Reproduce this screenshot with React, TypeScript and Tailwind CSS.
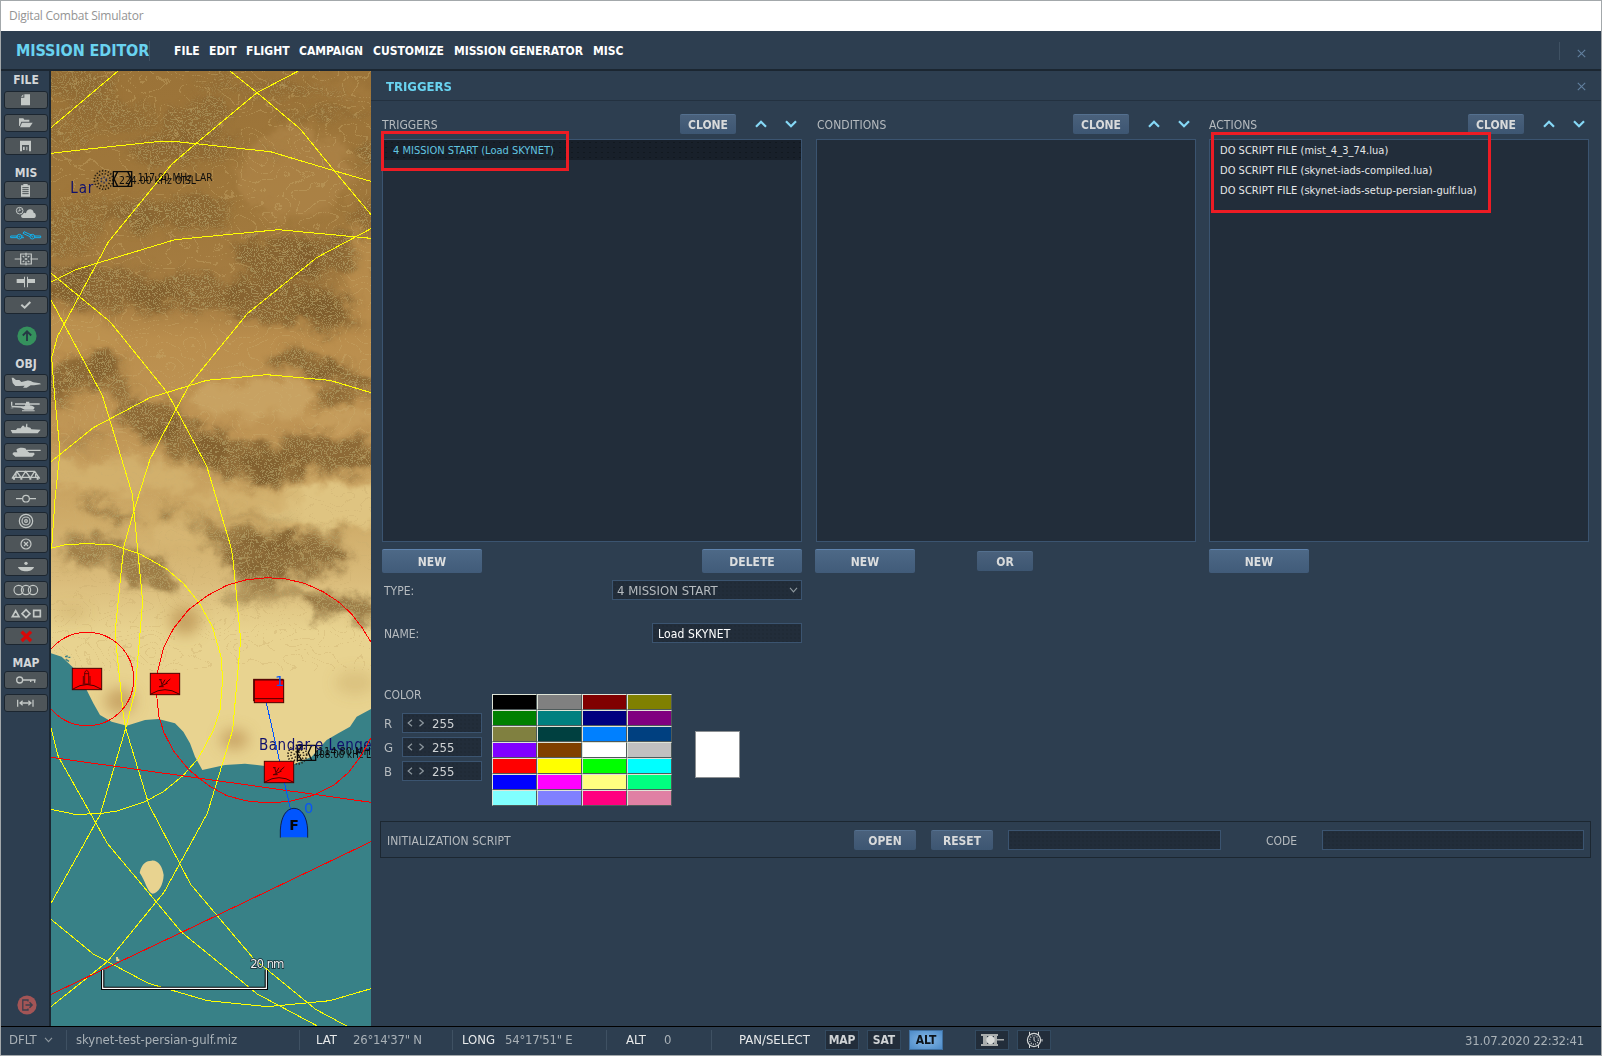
import React from "react";

const OFF = "#c3c8c6";

/* ---------- sidebar icons, drawn on a 132 x 54 grid ---------- */
const icons: Record<string, React.ReactNode> = {
  newFile: <path d="M61 10H78V43H51V20H61Z M51 17L58 10V17Z" fill={OFF} />,
  open: (
    <g fill={OFF}>
      <path d="M45 13H58L61 17H76V23H52L47 36H45Z" />
      <path d="M54 26H86L77 40H48Z" />
    </g>
  ),
  save: <path fillRule="evenodd" d="M48 11H81V43H48Z M54 24V43H75V24Z M57 29H62V39H57Z M67 29H70V40H67Z" fill={OFF} />,
  brief: (
    <g>
      <path d="M51 13H58V9H71V13H78V47H51Z" fill={OFF} />
      <path d="M55 20H74M55 26H74M55 32H74M55 38H74" stroke="#4d5357" strokeWidth="3" />
    </g>
  ),
  weather: (
    <g fill={OFF}>
      <circle cx="47" cy="20" r="10" fill="none" stroke={OFF} strokeWidth="3" />
      <path d="M47 13V21H41M47 21L52 16" stroke={OFF} strokeWidth="2.5" fill="none" />
      <path d="M57 42C49 42 50 31 57 31C57 25 64 25 66 28C68 13 87 12 89 26C97 26 98 42 90 42Z" />
    </g>
  ),
  trigger: (
    <g fill="none" stroke="#12b2ee" strokeWidth="3">
      <path d="M20 27H39V32H20ZM92 27H110V32H92ZM52 27H58M52 32H60M60 14L84 25M57 19L78 29M60 14L57 19" />
      <circle cx="46" cy="29" r="7" />
      <circle cx="85" cy="29" r="7" />
      <circle cx="46" cy="29" r="1.5" />
      <circle cx="85" cy="29" r="1.5" />
    </g>
  ),
  goal: (
    <g fill="none" stroke={OFF} strokeWidth="3.6">
      <path d="M32 27H53M79 27H102M66 8V20M66 34V46M50 12H82V42H50ZM56 18L61 22M76 18L71 22M56 36L61 32M76 36L71 32M62 27H70M66 24V30" />
    </g>
  ),
  split: <path d="M38 18H60V30H38ZM72 18H93V30H72ZM60 11H63V43H60ZM69 11H72V43H69Z" fill={OFF} />,
  check: <path d="M52 26L62 35L79 18" fill="none" stroke={OFF} strokeWidth="6" />,
  plane: <path d="M23 11H28L36 18H46L52 24L68 20C75 18 82 21 88 25L108 28L111 31L90 34H80L68 41H57L62 35L46 36H34L26 27Z" fill={OFF} />,
  heli: (
    <g fill={OFF}>
      <path d="M33 19H107V23H33ZM66 14H76V19H66ZM63 20H78V26H63ZM21 14H25V26H21Z" />
      <path d="M21 26L59 28C68 23 85 23 92 32L88 38H62L50 32L24 31ZM54 40H92V43H54ZM20 34H28V32H20Z" />
    </g>
  ),
  ship: <path d="M20 30H36L40 25H50L55 17H60L62 22H65L67 11H70V21L79 23L82 28L110 29L101 40H25Z" fill={OFF} />,
  tank: <path d="M37 20C42 14 58 13 66 17V20H110V24H70L76 29H90L92 34L85 41H34L25 33L29 28H40Z" fill={OFF} />,
  bridge: (
    <g fill="none" stroke={OFF} strokeWidth="4">
      <path d="M24 38L38 16H92L107 38M24 34H107M38 16L52 36L65 16L79 36L92 16M36 18V36M95 18V36" />
      <path d="M30 36V41M52 36V41M79 36V41M101 36V41" strokeWidth="6" />
    </g>
  ),
  waypoint: (
    <g fill="none" stroke={OFF} strokeWidth="3.6">
      <circle cx="66" cy="29" r="10" />
      <path d="M36 29H56M76 29H96" />
    </g>
  ),
  target: (
    <g fill="none" stroke={OFF} strokeWidth="3.6">
      <circle cx="66" cy="27" r="20" />
      <circle cx="66" cy="27" r="12" />
      <circle cx="66" cy="27" r="4" />
    </g>
  ),
  crossed: (
    <g fill="none" stroke={OFF} strokeWidth="3.6">
      <circle cx="66" cy="27" r="15" />
      <path d="M60 21L72 33M72 21L60 33" />
    </g>
  ),
  buoy: (
    <g fill={OFF}>
      <circle cx="66" cy="16" r="5" />
      <path d="M42 27H90C86 44 46 44 42 27Z" />
    </g>
  ),
  rings: (
    <g fill="none" stroke={OFF} strokeWidth="3.4">
      <circle cx="44" cy="27" r="14" />
      <circle cx="66" cy="27" r="14" />
      <circle cx="87" cy="27" r="14" />
    </g>
  ),
  shapes: (
    <g fill="none" stroke={OFF} strokeWidth="5">
      <path d="M25 38L35 20L45 38ZM66 17L78 29L66 41L54 29ZM89 19H109V38H89Z" />
    </g>
  ),
  remove: <path d="M53 14L81 42M81 14L53 42" stroke="#d80808" strokeWidth="10" />,
  key: (
    <g fill="none" stroke={OFF} strokeWidth="4">
      <circle cx="47" cy="27" r="9" />
      <path d="M56 27H95M92 27V35M80 27V33" />
    </g>
  ),
  ruler: (
    <g fill="none" stroke={OFF} strokeWidth="3.8">
      <path d="M41 17V38M87 17V38M47 27H81M56 20L48 27L56 34M73 20L81 27L73 34" />
    </g>
  ),
};

const SideButton = ({ name }: { name: string }) => (
  <button className="block h-[18px] w-[44px] rounded-[3px] border border-[#1c2630] bg-[#4e5559]">
    <svg viewBox="3 3 126 48" className="block h-[16px] w-[42px]">
      {icons[name]}
    </svg>
  </button>
);

const SideLabel = ({ children }: { children: string }) => (
  <div className="h-[14px] w-[44px] text-center text-[12px] leading-[14px] font-bold text-[#d3d6d8]">{children}</div>
);

const SideGroup = ({ names }: { names: string[] }) => (
  <div className="flex flex-col gap-[5px]">
    {names.map((n) => (
      <SideButton key={n} name={n} />
    ))}
  </div>
);

const Sidebar = () => (
  <aside className="flex w-[50px] shrink-0 flex-col border-r-2 border-[#1c2833] pl-[3px]">
    <div className="mt-[2px]" />
    <SideLabel>FILE</SideLabel>
    <div className="mt-[4px]" />
    <SideGroup names={["newFile", "open", "save"]} />
    <div className="mt-[11px]" />
    <SideLabel>MIS</SideLabel>
    <div className="mt-[1px]" />
    <SideGroup names={["brief", "weather", "trigger", "goal", "split", "check"]} />
    <svg viewBox="0 0 20 20" className="mt-[12px] ml-[12.5px] h-[20px] w-[20px] shrink-0">
      <circle cx="10" cy="10" r="9.6" fill="#35915d" />
      <path d="M10 15V5.5M5.8 9.5L10 5.3L14.2 9.5" stroke="#253744" strokeWidth="1.8" fill="none" />
    </svg>
    <div className="mt-[11px]" />
    <SideLabel>OBJ</SideLabel>
    <div className="mt-[3px]" />
    <SideGroup names={["plane", "heli", "ship", "tank", "bridge", "waypoint", "target", "crossed", "buoy", "rings", "shapes", "remove"]} />
    <div className="mt-[11px]" />
    <SideLabel>MAP</SideLabel>
    <div className="mt-[1px]" />
    <SideGroup names={["key", "ruler"]} />
    <svg viewBox="0 0 20 20" className="mt-auto mb-[11px] ml-[12.5px] h-[20px] w-[20px] shrink-0">
      <circle cx="10" cy="10" r="9.6" fill="#a35556" />
      <path d="M11 6.5V5H5.8V15H11V13.5M8.5 10H15M12.5 7.3L15.2 10L12.5 12.7" stroke="#3c3f4d" strokeWidth="1.3" fill="none" />
    </svg>
  </aside>
);

/* ---------- map ---------- */
const bands = (n: number, step: number) => Array.from({ length: n }, (_, i) => (i % step === 0 ? 1 : 0)).join(" ");

/* x, y, rx, ry, opacity, rotation */
const ridges: [number, number, number, number, number, number][] = [
  [100, 45, 120, 40, 0.4, 0], [200, 130, 130, 45, 0.35, 10], [60, 190, 70, 60, 0.2, 0],
  [450, 150, 120, 60, 0.45, -20], [410, 240, 170, 45, 0.5, 0], [360, 425, 200, 48, 0.6, 0],
  [300, 470, 50, 40, 0.4, 0], [80, 470, 90, 90, 0.35, 0], [680, 55, 240, 18, 0.35, 5], [830, 135, 130, 13, 0.4, 0],
  [680, 240, 45, 12, 0.3, 0], [965, 262, 35, 26, 0.6, 0], [955, 440, 35, 45, 0.5, 0], [200, 660, 190, 65, 0.7, 5],
  [60, 640, 70, 40, 0.6, 0], [430, 670, 170, 60, 0.65, 0], [700, 560, 130, 65, 0.8, 0], [840, 560, 100, 60, 0.7, -15],
  [720, 690, 190, 65, 0.8, 5], [830, 730, 100, 50, 0.85, 10],
  [110, 910, 120, 50, 0.85, -20], [200, 930, 80, 40, 0.7, 40], [40, 975, 60, 30, 0.5, 0],
  [320, 1050, 105, 60, 0.85, 15], [430, 1120, 110, 50, 0.75, 20], [580, 1160, 140, 65, 0.85, 20], [690, 1190, 90, 50, 0.8, 0],
  [850, 1150, 150, 60, 0.9, 5], [780, 880, 100, 35, 0.85, 10], [920, 925, 100, 35, 0.8, 15], [870, 985, 60, 30, 0.8, 0],
  [180, 1320, 80, 18, 0.55, 25], [240, 1355, 40, 16, 0.5, 0], [110, 1110, 80, 18, 0.3, 0], [370, 1320, 40, 22, 0.6, -20],
  [480, 1360, 50, 18, 0.5, 0], [620, 1410, 150, 35, 0.75, 5], [720, 1460, 190, 55, 0.9, 0], [830, 1400, 70, 25, 0.5, 0],
  [640, 1335, 140, 8, 0.35, 5], [150, 1430, 100, 32, 0.6, -5], [290, 1500, 110, 42, 0.75, 18], [120, 1465, 60, 25, 0.5, 0],
  [730, 1570, 150, 22, 0.5, 5], [900, 1610, 120, 32, 0.8, 5], [590, 1580, 60, 22, 0.4, -20], [640, 1510, 80, 40, 0.7, 0],
];

const smudges: [number, number, number, number, number][] = [
  [420, 1665, 45, 42, 0.7], [225, 1905, 45, 38, 0.65], [568, 2020, 42, 30, 0.65], [930, 1850, 60, 38, 0.25], [80, 1640, 50, 22, 0.25],
];

const lights: [number, number, number, number, string, number][] = [
  [750, 310, 170, 140, "#ab8246", 0.9], [950, 620, 50, 150, "#ba8e4d", 0.85], [880, 60, 110, 30, "#a97f42", 0.5],
  [90, 790, 130, 50, "#bd9250", 0.8], [620, 985, 180, 60, "#c8a262", 1], [110, 1040, 80, 30, "#c09757", 0.9],
  [220, 1220, 220, 50, "#d3b16e", 0.9], [860, 1310, 200, 65, "#dfc481", 1], [400, 1395, 80, 40, "#d6b673", 0.9],
  [900, 1048, 140, 16, "#c9a361", 0.8], [600, 1290, 170, 30, "#d3b16e", 0.9],
];

const Radar = ({ x, y }: { x: number; y: number }) => (
  <g transform={`translate(${x} ${y})`} fill="none" stroke="#4a0000" strokeWidth="3">
    <rect x="0" y="0" width="88" height="64" fill="#fe0000" />
    <path d="M2 62Q44 36 86 62" />
    <path d="M26 19H34M31 19L35 34L44 19M28 40L52 29M46 29L60 17M26 40H40" />
  </g>
);

const MapView = () => (
  <svg viewBox="18 15 960 2865" className="block h-[955px] w-[320px] shrink-0" preserveAspectRatio="none">
    <defs>
      <linearGradient id="land" gradientUnits="userSpaceOnUse" x1="0" y1="15" x2="0" y2="2200">
        <stop offset="0" stopColor="#9b7338" />
        <stop offset="0.2" stopColor="#a0783c" />
        <stop offset="0.31" stopColor="#a67d42" />
        <stop offset="0.37" stopColor="#ba8e4d" />
        <stop offset="0.5" stopColor="#c09656" />
        <stop offset="0.62" stopColor="#cfac69" />
        <stop offset="0.7" stopColor="#dabc7b" />
        <stop offset="0.77" stopColor="#e8d390" />
        <stop offset="1" stopColor="#e8d390" />
      </linearGradient>
      <filter id="rough" x="-10%" y="-10%" width="120%" height="120%" colorInterpolationFilters="sRGB">
        <feGaussianBlur stdDeviation="13" result="b" />
        <feTurbulence type="fractalNoise" baseFrequency="0.014" numOctaves="4" seed="4" result="n" />
        <feDisplacementMap in="b" in2="n" scale="90" xChannelSelector="R" yChannelSelector="G" result="d" />
        <feOffset in="d" dx="0" dy="12" />
      </filter>
      <filter id="soft" x="-10%" y="-10%" width="120%" height="120%">
        <feGaussianBlur stdDeviation="20" />
      </filter>
      <filter id="contour" filterUnits="userSpaceOnUse" x="18" y="15" width="960" height="1800" colorInterpolationFilters="sRGB">
        <feTurbulence type="fractalNoise" baseFrequency="0.006 0.008" numOctaves="4" seed="11" />
        <feColorMatrix values="0 0 0 0 0.70  0 0 0 0 0.63  0 0 0 0 0.41  1 0 0 0 0" />
        <feComponentTransfer>
          <feFuncA type="discrete" tableValues={bands(150, 4)} />
        </feComponentTransfer>
      </filter>
      <filter id="contourWide" filterUnits="userSpaceOnUse" x="18" y="15" width="960" height="1800" colorInterpolationFilters="sRGB">
        <feTurbulence type="fractalNoise" baseFrequency="0.005 0.007" numOctaves="3" seed="23" />
        <feColorMatrix values="0 0 0 0 0.80  0 0 0 0 0.69  0 0 0 0 0.44  1 0 0 0 0" />
        <feComponentTransfer>
          <feFuncA type="discrete" tableValues={bands(170, 16)} />
        </feComponentTransfer>
      </filter>
      <mask id="ridgeMask" maskUnits="userSpaceOnUse" x="18" y="15" width="960" height="1800">
        <g filter="url(#rough)">
          {ridges.map(([x, y, rx, ry, o, r], i) => (
            <ellipse key={i} cx={x} cy={y} rx={rx} ry={ry} fill="#fff" opacity={Math.min(1, o + 0.4)} transform={`rotate(${r} ${x} ${y})`} />
          ))}
        </g>
      </mask>
    </defs>

    <rect x="18" y="15" width="960" height="2865" fill="url(#land)" />
    <g filter="url(#rough)">
      {lights.map(([x, y, rx, ry, c, o], i) => (
        <ellipse key={i} cx={x} cy={y} rx={rx} ry={ry} fill={c} opacity={o} />
      ))}
    </g>
    <g filter="url(#rough)">
      {ridges.map(([x, y, rx, ry, o, r], i) => (
        <ellipse key={i} cx={x} cy={y} rx={rx} ry={ry} fill="#7c5a2b" opacity={o * 0.85} transform={`rotate(${r} ${x} ${y})`} />
      ))}
    </g>
    <g filter="url(#soft)">
      {smudges.map(([x, y, rx, ry, o], i) => (
        <ellipse key={i} cx={x} cy={y} rx={rx} ry={ry} fill="#b88e4e" opacity={o} />
      ))}
    </g>
    <rect x="18" y="15" width="960" height="1270" filter="url(#contourWide)" opacity="0.35" />
    <g mask="url(#ridgeMask)" opacity="0.62">
      <rect x="18" y="15" width="960" height="1800" filter="url(#contour)" />
    </g>

    <g transform="translate(0 1422)">
      <path
        d="M18 340L50 350L85 383L125 450L145 490L165 525L200 545L245 557L300 540L340 537L390 550L415 575L435 610L450 650L472 690L540 675L600 671L660 678L750 672L800 650L845 600L880 580L915 560L935 530L978 507V1460H18Z"
        fill="#388187"
      />
      <path d="M284 998C290 970 305 962 320 962C340 960 352 980 356 1005C355 1035 340 1060 322 1061C308 1058 300 1020 284 998Z" fill="#e8d390" />
      <path d="M213 1251H219V1256H223V1263H214Z" fill="#e8d390" />
      <path d="M60 350H66V346M70 352H76M62 358L72 364" stroke="#388187" strokeWidth="4" fill="none" />
    </g>

    {/* navigation beacons and place names */}
    <g fill="none" stroke="#2a2216" strokeWidth="5" strokeDasharray="4 5">
      <circle cx="176" cy="342" r="28" />
      <circle cx="176" cy="342" r="19" />
      <circle cx="176" cy="342" r="8" stroke="#26305a" />
      <circle cx="757" cy="2066" r="28" />
      <circle cx="757" cy="2066" r="19" />
      <circle cx="757" cy="2066" r="9" />
    </g>
    <g fill="none" stroke="#0a0a0a" strokeWidth="4">
      <path d="M205 317H260V361H205ZM218 317L207 339L218 361M248 317L259 339L248 361" />
      <path d="M757 2038H812V2083H757ZM770 2083L757 2062L770 2038M800 2038L790 2060L800 2083" />
    </g>
    <g className="font-['DejaVu_Sans']">
      <text x="76" y="381" fontSize="45" fill="#10106c" textLength="69">Lar</text>
      <text x="642" y="2053" fontSize="45" fill="#10106c" textLength="338">Bandar-e Lenge</text>
      <g fontSize="30" fill="#0c0c0c">
        <text x="222" y="353" textLength="231" lengthAdjust="spacingAndGlyphs">224.00 kHz OISL</text>
        <text x="278" y="346" textLength="225" lengthAdjust="spacingAndGlyphs">117.90 MHz LAR</text>
        <text x="806" y="2077" textLength="172" lengthAdjust="spacingAndGlyphs">408.00 kHz L</text>
        <text x="818" y="2067" textLength="160" lengthAdjust="spacingAndGlyphs">114.80 MH</text>
      </g>
    </g>

    {/* threat and detection ranges */}
    <g fill="none" stroke="#ffff00" strokeWidth="3" shapeRendering="crispEdges">
      <path d="M18 185L219 15" />
      <path d="M760 15L636 80L450 235L380 295L190 528L102 692L38 810L20 875L28 980L45 1155L30 1300L20 1445" />
      <path d="M18 262L130 249L345 226L405 228L676 257L870 315L978 346" />
      <path d="M555 15L636 80L765 188L870 317L978 446" />
      <path d="M18 648L92 611L155 592L390 521L700 491L925 512L978 517" />
      <path d="M18 622L38 638L195 767L367 980L485 1200L557 1440L563 1472L572 1562L587 1722L563 1992L487 2242L357 2479L187 2687L18 2822" />
      <path d="M978 488L815 575L607 743L432 958L393 1030L315 1180L268 1330L237 1440L230 1502L210 1702L235 1947L242 1987L312 2217L437 2455L625 2677L812 2830L905 2880" />
      <path d="M18 1187L145 1085L315 995L485 943L665 926L855 943L978 980" />
      <path d="M18 702L172 988L262 1285L277 1440L293 1607L270 1877L242 1987L165 2247L18 2512" />
    </g>
    <g transform="translate(0 1422)" fill="none" strokeWidth="3" shapeRendering="crispEdges">
      <g stroke="#ffff00">
        <path d="M18 25L60 14L125 11L200 14L285 42L365 87L415 130L462 188L503 262L528 350L533 420L525 510L503 575L460 655L415 706L355 755L300 785L215 813L165 821L90 823L18 808" />
        <path d="M18 565L40 650L187 910L410 1177L637 1362L815 1457" />
        <path d="M18 1138L145 1242L310 1330L487 1382L668 1400L855 1382L978 1346" />
      </g>
      <g stroke="#ff0000">
        <circle cx="126" cy="417" r="140" />
        <path d="M668 113L724 117L781 131L834 155L880 185L918 220L952 264L980 310M980 590L945 652L910 698L866 736L808 765L735 784L668 789L600 782L543 766L490 736L430 688L385 632L356 576L342 530L335 466L338 395L356 322L386 265L430 210L485 168L545 136L605 119L668 113" />
        <path d="M18 652L978 787" />
        <path d="M18 1363L410 1177L978 905" />
      </g>
      <path d="M664 488L737 810" stroke="#0055ff" />
    </g>

    {/* units */}
    <g transform="translate(0 1422)">
      <g fill="none" stroke="#4a0000" strokeWidth="3">
        <rect x="82" y="385" width="88" height="64" fill="#fe0000" />
        <path d="M84 447Q126 420 168 447" />
        <path d="M119 431V398Q125 384 131 398V431M115 431V408M135 431V408M113 432H137M119 401H131" strokeWidth="2.5" />
        <rect x="626" y="418" width="88" height="64" fill="#fe0000" />
        <rect x="628" y="420" width="88" height="68" fill="#fe0000" />
        <path d="M628 476H716" />
      </g>
      <Radar x={316} y={400} />
      <Radar x={658} y={664} />
      <path d="M706 892V870C708 830 724 805 747 805C770 805 786 830 788 870V892Z" fill="#0055ff" />
      <path d="M706 893V870C708 830 724 805 747 805C770 805 786 830 788 870V893" fill="none" stroke="#10204a" strokeWidth="3" />
      <g className="font-['DejaVu_Sans'] [font-stretch:normal]" fontSize="44" fill="#0a55f5">
        <text x="690" y="437">1</text>
        <text x="777" y="818">0</text>
        <text x="733" y="871" fontSize="42" fontWeight="bold" fill="#05070c">F</text>
      </g>
      <path d="M173 1290V1345H664V1290" fill="none" stroke="#000" strokeWidth="10" />
      <path d="M173 1290V1345H664V1290" fill="none" stroke="#fff" strokeWidth="3.5" />
      <text
        x="616"
        y="1283"
        textLength="102"
        wordSpacing="5"
        fontSize="39"
        fill="#eef2f2"
        stroke="#14222a"
        strokeWidth="4"
        paintOrder="stroke"
        className="font-['DejaVu_Sans'] [font-stretch:condensed]"
      >
        20 nm
      </text>
    </g>
  </svg>
);

/* ---------- shared controls ---------- */
const BigButton = ({ children }: { children: string }) => (
  <button className="h-[24px] w-[100px] rounded-[2px] border-t border-[#5f83ad] bg-linear-to-b from-[#4d6987] to-[#415b79] pt-px text-center text-[12px] leading-[22px] font-bold text-[#dcdedf]">
    {children}
  </button>
);

const SmallButton = ({ children, wide }: { children: string; wide?: boolean }) => (
  <button
    className={`h-[20px] rounded-[2px] border-t border-[#54708f] bg-linear-to-b from-[#4a617c] to-[#3d5672] pt-px text-center text-[12px] leading-[18px] font-bold text-[#d8dadb] ${wide ? "w-[62px]" : "w-[56px]"}`}
  >
    {children}
  </button>
);

const Chevron = ({ up }: { up?: boolean }) => (
  <svg viewBox="0 0 12 8" className="h-[8px] w-[12px]">
    <path d={up ? "M1 6.8L6 1.8L11 6.8" : "M1 1.2L6 6.2L11 1.2"} stroke="#86d8f6" strokeWidth="2.2" fill="none" />
  </svg>
);

const Cross = () => (
  <svg viewBox="0 0 9 9" className="h-[9px] w-[9px]">
    <path d="M.8.8L8.2 8.2M8.2.8L.8 8.2" stroke="#62809f" strokeWidth="1.1" />
  </svg>
);

const ListHead = ({ title, end }: { title: string; end: string }) => (
  <div className={`flex h-[20px] items-center ${end}`}>
    <span className="flex-1 pt-px text-[12px] tracking-[0.05px] text-[#b6bbbf]">{title}</span>
    <SmallButton>CLONE</SmallButton>
    <span className="ml-[19px] flex"><Chevron up /></span>
    <span className="ml-[18px] flex"><Chevron /></span>
  </div>
);

const dots = "bg-[#222d3a] bg-[radial-gradient(#1e2832_0.6px,transparent_0.8px)] bg-[size:4px_4px]";

const Spinner = ({ label }: { label: string }) => (
  <div className="flex h-[20px] items-center text-[13px] text-[#b6bbbf]">
    <span className="w-[18px] pt-px">{label}</span>
    <div className={`flex h-[20px] w-[80px] items-center border border-[#3b5470] pl-[4px] ${dots}`}>
      <svg viewBox="0 0 17 8" className="h-[8px] w-[17px]">
        <path d="M5 .8L1.2 4L5 7.2M12.5 .8L16.3 4L12.5 7.2" stroke="#8e989f" strokeWidth="1.2" fill="none" />
      </svg>
      <span className="ml-[8px] pt-[2px] text-[13px] text-[#d0d3d5]">255</span>
    </div>
  </div>
);

const palette = [
  "#000000", "#808080", "#800000", "#808000",
  "#008000", "#008080", "#000080", "#800080",
  "#808040", "#004040", "#0080ff", "#004080",
  "#8000ff", "#804000", "#ffffff", "#c0c0c0",
  "#ff0000", "#ffff00", "#00ff00", "#00ffff",
  "#0000ff", "#ff00ff", "#ffff80", "#00ff80",
  "#80ffff", "#8080ff", "#ff0080", "#e080a4",
];

const listBox = "relative mt-[5px] h-[403px] border border-[#3b5470] bg-[#222d3a]";

const Panel = () => (
  <main className="flex min-w-0 flex-1 flex-col">
    <div className="flex h-[30px] items-center justify-between border-b border-[#233140] pt-px pr-[15px] pl-[15px]">
      <span className="pt-px text-[13px] font-bold text-[#69d3f0]">TRIGGERS</span>
      <Cross />
    </div>

    <div className="mt-[13px] ml-[11px] flex">
      <section className="w-[420px]">
        <ListHead title="TRIGGERS" end="pr-[5px]" />
        <div className={listBox}>
          <div className="h-[20px] bg-[#18202a] bg-[radial-gradient(#121920_0.6px,transparent_0.8px)] bg-[size:6px_5px] pl-[10px] text-[11px] leading-[22px] text-[#62c5e0]">
            4 MISSION START (Load SKYNET)
          </div>
          <div className="absolute top-[-9px] left-[-2px] h-[40px] w-[188px] border-3 border-[#ed1c24]" />
        </div>
        <div className="mt-[7px] flex justify-between">
          <BigButton>NEW</BigButton>
          <BigButton>DELETE</BigButton>
        </div>
      </section>
      <section className="ml-[14px] w-[380px]">
        <ListHead title="CONDITIONS" end="pr-[6px] pl-px" />
        <div className={listBox} />
        <div className="mt-[7px] -ml-px flex items-center">
          <BigButton>NEW</BigButton>
          <span className="ml-[62px] flex"><SmallButton>OR</SmallButton></span>
        </div>
      </section>
      <section className="ml-[13px] w-[380px]">
        <ListHead title="ACTIONS" end="pr-[4px]" />
        <div className={listBox}>
          {["mist_4_3_74.lua", "skynet-iads-compiled.lua", "skynet-iads-setup-persian-gulf.lua"].map((f) => (
            <div key={f} className="h-[20px] pl-[10px] text-[11px] leading-[22px] tracking-[0.02px] whitespace-nowrap text-[#e6e8e9]">
              DO SCRIPT FILE ({f})
            </div>
          ))}
          <div className="absolute top-[-8px] left-[1px] h-[81px] w-[280px] border-3 border-[#ed1c24]" />
        </div>
        <div className="mt-[7px] flex">
          <BigButton>NEW</BigButton>
        </div>
      </section>
    </div>

    <div className="mt-[7px] ml-[13px] w-[418px] text-[12px] text-[#b6bbbf]">
      <div className="flex h-[20px] items-center justify-between">
        <span className="pt-[2px]">TYPE:</span>
        <div className={`flex h-[20px] w-[190px] items-center justify-between border border-[#3b5470] pr-[3px] pl-[4px] text-[13px] ${dots}`}>
          <span className="pt-[2px]">4 MISSION START</span>
          <svg viewBox="0 0 9 6" className="h-[6px] w-[9px]">
            <path d="M1 .8L4.5 4.8L8 .8" stroke="#8e989f" strokeWidth="1.1" fill="none" />
          </svg>
        </div>
      </div>
      <div className="mt-[23px] flex h-[20px] items-center justify-between">
        <span className="pt-[2px]">NAME:</span>
        <div className={`flex h-[20px] w-[150px] items-center border border-[#3b5470] pt-[2px] pl-[5px] tracking-[0.15px] text-white ${dots}`}>Load SKYNET</div>
      </div>
    </div>

    <div className="mt-[44px] ml-[13px] flex h-[127px]">
      <div className="w-[98px]">
        <div className="text-[12px] leading-[16px] text-[#b6bbbf]">COLOR</div>
        <div className="mt-[10px] flex flex-col gap-[4px]">
          <Spinner label="R" />
          <Spinner label="G" />
          <Spinner label="B" />
        </div>
      </div>
      <div className="mt-[7px] ml-[10px] grid h-[112px] w-[180px] grid-cols-4 grid-rows-7">
        {palette.map((c) => (
          <div key={c} className="border border-t-[#dfe5d8] border-r-[#4e5a5a] border-b-[#4e5a5a] border-l-[#dfe5d8]" style={{ backgroundColor: c }} />
        ))}
      </div>
      <div className="mt-[44px] ml-[23px] h-[47px] w-[45px] border border-[#8b8f92] bg-white" />
    </div>

    <div className="mt-[7px] ml-[9px] flex h-[37px] w-[1211px] items-center border border-[#1c2731] pl-[6px]">
      <span className="w-[467px] pt-[2px] text-[12px] tracking-[0.05px] text-[#b6bbbf]">INITIALIZATION SCRIPT</span>
      <SmallButton wide>OPEN</SmallButton>
      <span className="ml-[15px] flex"><SmallButton wide>RESET</SmallButton></span>
      <div className={`ml-[15px] h-[20px] w-[213px] border border-[#3b5470] ${dots}`} />
      <span className="ml-[45px] w-[56px] pt-[2px] text-[12px] text-[#b6bbbf]">CODE</span>
      <div className={`h-[20px] w-[262px] border border-[#3b5470] ${dots}`} />
    </div>
  </main>
);

/* ---------- status bar ---------- */
const Sep = () => <span className="h-[20px] w-px bg-[#3f5163]" />;

const Toggle = ({ children, on }: { children: React.ReactNode; on?: boolean }) => (
  <span
    className={`flex h-[20px] w-[34px] items-center justify-center border text-[12px] font-bold tracking-[-0.1px] ${on ? "border-[#3f6f9f] bg-[radial-gradient(#86b9e8,#4d8bc8)] text-[#0d141b]" : "border-[#334a60] bg-[#222d3a] text-[#d0d3d5]"}`}
  >
    {children}
  </span>
);

const StatusBar = () => (
  <footer className="flex h-[29px] shrink-0 items-center border-t border-black pb-[3px] pl-[8px] text-[13px] whitespace-nowrap text-[#a9b1b7]">
    <span className="w-[34px]">DFLT</span>
    <svg viewBox="0 0 9 6" className="ml-px h-[6px] w-[9px]">
      <path d="M1 .8L4.5 4.6L8 .8" stroke="#8e989f" strokeWidth="1.1" fill="none" />
    </svg>
    <span className="w-[13px]" />
    <Sep />
    <span className="ml-[9px] w-[223px] tracking-[-0.06px]">skynet-test-persian-gulf.miz</span>
    <Sep />
    <span className="ml-[16px] w-[37px] text-[#e8eaeb]">LAT</span>
    <span className="w-[99px] tracking-[-0.25px]">26°14'37" N</span>
    <Sep />
    <span className="ml-[9px] w-[43px] text-[#e8eaeb]">LONG</span>
    <span className="w-[101px] tracking-[-0.25px]">54°17'51" E</span>
    <Sep />
    <span className="ml-[19px] w-[38px] text-[#e8eaeb]">ALT</span>
    <span className="w-[47px]">0</span>
    <Sep />
    <span className="ml-[27px] w-[86px] text-[#e8eaeb]">PAN/SELECT</span>
    <div className="flex gap-[8px]">
      <Toggle>MAP</Toggle>
      <Toggle>SAT</Toggle>
      <Toggle on>ALT</Toggle>
    </div>
    <div className="ml-[32px] flex gap-[8px]">
      <Toggle>
        <svg viewBox="0 0 24 14" className="h-[14px] w-[24px]">
          <path d="M1 1H18V3H1ZM1 11H18V13H1ZM3 3H7V11H3ZM14 3H17V11H14ZM16 6H24V7.5H16Z" fill="#a9adad" />
          <circle cx="10.5" cy="7" r="4.2" fill="#d8dad8" />
        </svg>
      </Toggle>
      <Toggle>
        <svg viewBox="0 0 18 18" className="h-[18px] w-[18px]" fill="none" stroke="#d3d6d6">
          <circle cx="9" cy="9" r="6.6" strokeWidth="1.2" />
          <circle cx="9" cy="9" r="4.3" strokeWidth="1.2" strokeDasharray="1 1.25" />
          <path d="M4.5 .8V4M13.5 .8V4M4.5 17V14M13.5 17V14M9 6V9.5L10.5 10.5M17 8V10.5" />
        </svg>
      </Toggle>
    </div>
    <span className="mt-[3px] mr-[17px] ml-auto tracking-[-0.22px]">31.07.2020 22:32:41</span>
  </footer>
);

const menu: [string, string][] = [
  ["FILE", "w-[35px]"],
  ["EDIT", "w-[37px]"],
  ["FLIGHT", "w-[53px]"],
  ["CAMPAIGN", "w-[74px]"],
  ["CUSTOMIZE", "w-[81px]"],
  ["MISSION GENERATOR", "w-[139px]"],
  ["MISC", "w-[40px]"],
];

export default function App() {
  return (
    <div className="flex h-[1056px] w-[1602px] flex-col overflow-hidden border border-[#a3a8ab] bg-[#2d3e50] font-['DejaVu_Sans_Condensed','DejaVu_Sans',sans-serif] [font-stretch:condensed]">
      <div className="flex h-[30px] shrink-0 items-center bg-white pl-[8px] font-['Open_Sans',sans-serif] text-[12px] tracking-[-0.23px] text-[#949494] [font-stretch:normal]">
        Digital Combat Simulator
      </div>
      <header className="flex h-[40px] shrink-0 items-center border-b-2 border-[#1b2631] pt-[2px] pl-[15px] whitespace-nowrap">
        <span className="w-[133px] text-[16px] font-bold tracking-[-0.1px] text-[#69d3f0]">MISSION EDITOR</span>
        <span className="h-[20px] w-px bg-[#3f5163]" />
        <nav className="ml-[24px] flex text-[12px] font-bold text-white">
          {menu.map(([m, w]) => (
            <span key={m} className={w}>{m}</span>
          ))}
        </nav>
        <span className="ml-auto h-[18px] w-px bg-[#3f5163]" />
        <span className="mt-[4px] mr-[15px] ml-[17px] flex"><Cross /></span>
      </header>
      <div className="flex min-h-0 flex-1">
        <Sidebar />
        <MapView />
        <Panel />
      </div>
      <StatusBar />
    </div>
  );
}
